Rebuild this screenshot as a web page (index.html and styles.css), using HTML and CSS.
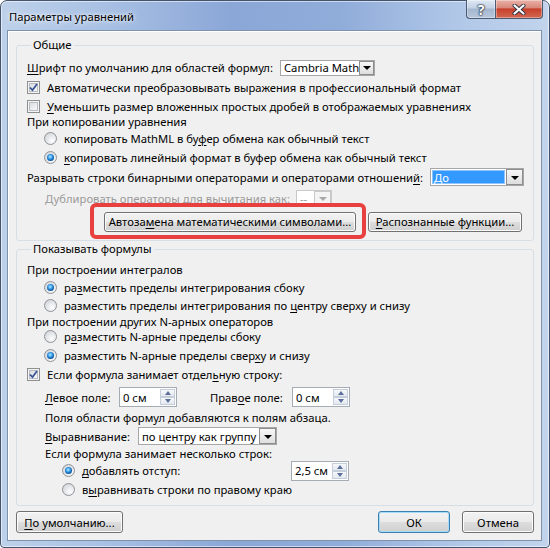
FILE: index.html
```html
<!DOCTYPE html>
<html lang="ru">
<head>
    <meta charset="UTF-8">
    <meta name="viewport" content="width=device-width, initial-scale=1.0">
    <title>Параметры уравнений</title>
    <link rel="stylesheet" href="styles.css">
</head>
<body>
    <div class="window">
        <div class="titlebar">
            <span class="title">Параметры уравнений</span>
            <div class="caption">
                <div class="cap-btn help">?</div>
                <div class="cap-btn close">
                    <svg width="14" height="11" viewBox="0 0 14 11">
                        <path d="M2.5 1.5 L11.5 9.5 M11.5 1.5 L2.5 9.5" stroke="#2b3342" stroke-width="4" stroke-linecap="round"/>
                        <path d="M2.5 1.5 L11.5 9.5 M11.5 1.5 L2.5 9.5" stroke="#fff" stroke-width="2.2" stroke-linecap="round"/>
                    </svg>
                </div>
            </div>
        </div>

        <div class="client">
            <fieldset class="group general">
                <legend>Общие</legend>

                <div class="row">
                    <span class="label w-font"><u>Ш</u>рифт по умолчанию для областей формул:</span>
                    <div class="combo combo-font">
                        <span class="combo-text">Cambria Math</span>
                        <span class="combo-arrow"></span>
                    </div>
                </div>
                <div class="row m4">
                    <span class="cb checked">
                        <svg width="9" height="9" viewBox="0 0 9 9"><path d="M1 4.5 L3.5 7.2 L8 1" fill="none" stroke="#3a5394" stroke-width="1.8"/></svg>
                    </span>
                    <span class="cb-text">Автоматически преобразовывать выражения в профессиональный формат</span>
                </div>
                <div class="row m2h">
                    <span class="cb"></span>
                    <span class="cb-text"><u>У</u>меньшить размер вложенных простых дробей в отображаемых уравнениях</span>
                </div>
                <div class="row mn0h">
                    <span>При копировании уравнения</span>
                </div>
                <div class="row m0h indent-radio">
                    <span class="rb"></span>
                    <span class="rb-text">копировать MathML в бу<u>ф</u>ер обмена как обычный текст</span>
                </div>
                <div class="row m3 indent-radio">
                    <span class="rb on"></span>
                    <span class="rb-text"><u>к</u>опировать линейный формат в буфер обмена как обычный текст</span>
                </div>
                <div class="row m4">
                    <span class="label w-break">Разрывать строки бинарными операторами и операторами отношени<u>й</u>:</span>
                    <div class="combo combo-break">
                        <span class="combo-text selected">До</span>
                        <span class="combo-arrow"></span>
                    </div>
                </div>
                <div class="row m5 indent disabled">
                    <span class="label w-dup">Дублировать операторы для вычитания как:</span>
                    <div class="combo combo-dup">
                        <span class="combo-text">--</span>
                        <span class="combo-arrow"></span>
                    </div>
                </div>
                <div class="row m7h buttons-row">
                    <div class="btn-wrap">
                        <button class="btn btn-auto">Автоза<u>м</u>ена математическими символами...</button>
                        <span class="highlight"></span>
                    </div>
                    <button class="btn btn-func"><u>Р</u>аспознанные функции...</button>
                </div>
            </fieldset>

            <fieldset class="group display">
                <legend>Показывать формулы</legend>

                <div class="row">
                    <span>При построении интегралов</span>
                </div>
                <div class="row m2 indent-radio">
                    <span class="rb on"></span>
                    <span class="rb-text">ра<u>з</u>местить пределы интегрирования сбоку</span>
                </div>
                <div class="row m2h indent-radio">
                    <span class="rb"></span>
                    <span class="rb-text">разместить пределы интегрирования по <u>ц</u>ентру сверху и снизу</span>
                </div>
                <div class="row mn0h">
                    <span>При построении других N-арных операторов</span>
                </div>
                <div class="row mn0h indent-radio">
                    <span class="rb"></span>
                    <span class="rb-text">р<u>а</u>зместить N-арные пределы сбоку</span>
                </div>
                <div class="row m2h indent-radio">
                    <span class="rb on"></span>
                    <span class="rb-text">разместить N-арные пределы свер<u>х</u>у и снизу</span>
                </div>
                <div class="row m3h">
                    <span class="cb checked">
                        <svg width="9" height="9" viewBox="0 0 9 9"><path d="M1 4.5 L3.5 7.2 L8 1" fill="none" stroke="#3a5394" stroke-width="1.8"/></svg>
                    </span>
                    <span class="cb-text">Если формула занимает отдел<u>ь</u>ную строку:</span>
                </div>
                <div class="row m6h indent">
                    <span class="label w-left"><u>Л</u>евое поле:</span>
                    <div class="spin">
                        <span class="spin-text">0 см</span>
                        <span class="spin-btns"><span class="spin-up"></span><span class="spin-down"></span></span>
                    </div>
                    <span class="label w-right">Прав<u>о</u>е поле:</span>
                    <div class="spin">
                        <span class="spin-text">0 см</span>
                        <span class="spin-btns"><span class="spin-up"></span><span class="spin-down"></span></span>
                    </div>
                </div>
                <div class="row m4 indent">
                    <span>Поля области формул добавляются к полям абзаца.</span>
                </div>
                <div class="row m3 indent">
                    <span class="label w-align"><u>В</u>ыравнивание:</span>
                    <div class="combo combo-align">
                        <span class="combo-text">по центру как группу</span>
                        <span class="combo-arrow"></span>
                    </div>
                </div>
                <div class="row m1 indent">
                    <span>Если формула занимает несколько строк:</span>
                </div>
                <div class="row m1h indent-radio2">
                    <span class="radio-item">
                        <span class="rb on"></span>
                        <span class="rb-text"><u>д</u>обавлять отступ:</span>
                    </span>
                    <div class="spin">
                        <span class="spin-text">2,5 см</span>
                        <span class="spin-btns"><span class="spin-up"></span><span class="spin-down"></span></span>
                    </div>
                </div>
                <div class="row m3 indent-radio2">
                    <span class="rb"></span>
                    <span class="rb-text">в<u>ы</u>равнивать строки по правому краю</span>
                </div>
            </fieldset>

            <div class="footer">
                <button class="btn btn-default"><u>П</u>о умолчанию...</button>
                <button class="btn btn-ok">ОК</button>
                <button class="btn btn-cancel">Отмена</button>
            </div>
        </div>
    </div>
</body>
</html>
```

FILE: styles.css
```css
body {
    margin: 0;
    font-family: "Noto Sans", sans-serif;
    font-size: 11.25px;
    color: #000;
    background-color: #fff;
}

u {
    text-decoration-thickness: 1px;
    text-underline-offset: 2px;
}

/* window frame */
.window {
    width: 550px;
    height: 548px;
    box-sizing: border-box;
    border: 1px solid #43546c;
    border-radius: 7px 7px 4px 4px;
    background: linear-gradient(90deg, #bed1ea 0%, #a9c1e4 18%, #8ba7d7 42%, #90acd9 62%, #b1c8e8 84%, #c2d4ec 100%);
    box-shadow: inset 0 0 0 1px rgba(255, 255, 255, 0.55);
    display: flex;
    flex-direction: column;
}

.titlebar {
    height: 29px;
    display: flex;
    align-items: flex-start;
}

.title {
    margin-left: 8px;
    padding-top: 7px;
    line-height: 17px;
    text-shadow: 0 0 6px rgba(255, 255, 255, 0.9), 0 0 3px rgba(255, 255, 255, 0.9);
}

.caption {
    margin-left: auto;
    margin-right: 6px;
    margin-top: -1px;
    display: flex;
}

.cap-btn {
    height: 19px;
    box-sizing: border-box;
    border: 1px solid #4a5a73;
    border-top: none;
    display: flex;
    justify-content: center;
    align-items: center;
    box-shadow: inset 0 0 0 1px rgba(255, 255, 255, 0.35);
}

.help {
    width: 29px;
    border-radius: 0 0 0 4px;
    border-right: none;
    background: linear-gradient(#dfe8f4 0%, #c3d1e4 45%, #a5b7cf 50%, #b7c7dc 100%);
    color: #fff;
    font-weight: bold;
    font-size: 14px;
    text-shadow: 0 0 1px #1d2a3d, 0 0 2px #1d2a3d, 0 0 2px #1d2a3d;
}

.close {
    width: 48px;
    border-radius: 0 0 4px 0;
    background: linear-gradient(#eab2a8 0%, #d98a7c 42%, #c7402c 50%, #d2674f 100%);
}

/* client area */
.client {
    flex: 1;
    margin: 0 7px 6px 6px;
    border: 1px solid #7f92ab;
    background-color: #f0f0f0;
    box-shadow: inset 1px 1px 0 #fff;
    padding: 6px 7px 7px 8px;
    display: flex;
    flex-direction: column;
}

.group {
    margin: 0;
    padding: 0 0 0 10px;
    min-inline-size: 0;
    border: 1px solid #d5dfe5;
    border-radius: 3px;
}

.group legend {
    margin-left: 4px;
    padding: 0 2px;
    line-height: 16px;
}

.general {
    padding-top: 6.5px;
    padding-bottom: 10.5px;
}

.display {
    padding-top: 4px;
    padding-bottom: 7.5px;
}

.row {
    height: 16px;
    line-height: 13px;
    display: flex;
    align-items: center;
    white-space: nowrap;
}

.m0h { margin-top: 0.5px; }
.m1 { margin-top: 1px; }
.m1h { margin-top: 1.5px; }
.m2 { margin-top: 2px; }
.m2h { margin-top: 2.5px; }
.m3 { margin-top: 3px; }
.m3h { margin-top: 3.5px; }
.m4 { margin-top: 4px; }
.m5 { margin-top: 5px; }
.m6h { margin-top: 6.5px; }
.m7h { margin-top: 7.5px; }
.mn0h { margin-top: -0.5px; }

.indent { padding-left: 18px; }
.indent-radio { padding-left: 17px; }
.indent-radio2 { padding-left: 35px; }

.disabled { color: #9b9b9b; }

.label { flex: none; }
.w-font { width: 253px; }
.w-break { width: 403px; }
.w-dup { width: 251px; }
.w-left { width: 74px; }
.w-right { width: 82px; margin-left: 33px; }
.w-align { width: 93px; }

/* checkbox */
.cb {
    flex: none;
    width: 13px;
    height: 13px;
    box-sizing: border-box;
    border: 1px solid #8e8f8f;
    background: linear-gradient(135deg, #cfd3d8 0%, #eef0f2 60%, #fbfbfb 100%);
    box-shadow: inset 0 0 0 1px #f4f4f4, inset 0 0 0 2px #b8bdc3;
    display: flex;
    justify-content: center;
    align-items: center;
}

.cb-text { margin-left: 7px; }

/* radio */
.rb {
    flex: none;
    width: 13px;
    height: 13px;
    box-sizing: border-box;
    border-radius: 50%;
    border: 1px solid #8f9296;
    background: radial-gradient(circle at 65% 70%, #ffffff 0%, #e6e8eb 45%, #c9cdd2 100%);
    display: flex;
    justify-content: center;
    align-items: center;
}

.rb.on::after {
    content: "";
    width: 7px;
    height: 7px;
    border-radius: 50%;
    background: radial-gradient(circle at 45% 40%, #b5ecff 0%, #3ea2ec 35%, #0f5ba6 65%, #0b2f5e 100%);
}

.rb-text { margin-left: 7px; }

.radio-item {
    width: 229px;
    display: flex;
    align-items: center;
}

/* combo boxes */
.combo {
    flex: none;
    display: flex;
    box-sizing: border-box;
    border: 1px solid #a7a7a7;
    background-color: #fff;
}

.combo-text {
    flex: 1;
    padding-left: 3px;
    display: flex;
    align-items: center;
}

.combo-text.selected {
    background-color: #3399ff;
    color: #fff;
    margin: 1px;
    padding-left: 2px;
    box-shadow: inset 0 0 0 1px #8ec4ff;
}

.combo-arrow {
    width: 17px;
    box-sizing: border-box;
    border: 1px solid #8d8d8d;
    background: linear-gradient(#f7f7f7, #dedede);
    display: flex;
    justify-content: center;
    align-items: center;
}

.combo-arrow::after {
    content: "";
    border-left: 4px solid transparent;
    border-right: 4px solid transparent;
    border-top: 4px solid #000;
    margin-top: 1px;
}

.combo-font { width: 95px; height: 16px; }
.combo-break { width: 94px; height: 18px; }
.combo-dup { width: 36px; height: 17px; border-color: #c9c9c9; }
.combo-dup .combo-arrow { border-color: #c9c9c9; background: #f4f4f4; }
.combo-dup .combo-arrow::after { border-top-color: #a8a8a8; }
.combo-align { width: 139px; height: 18px; }

/* spin boxes */
.spin {
    flex: none;
    width: 58px;
    height: 20px;
    box-sizing: border-box;
    border: 1px solid #a5acb5;
    background-color: #fff;
    display: flex;
}

.spin-text {
    flex: 1;
    padding-left: 3px;
    display: flex;
    align-items: center;
}

.spin-btns {
    width: 15px;
    padding: 1px 1px 1px 0;
    display: flex;
    flex-direction: column;
}

.spin-up,
.spin-down {
    flex: 1;
    border: 1px solid #c5cfdb;
    background: linear-gradient(#f6f8fb, #e4e9f0);
    display: flex;
    justify-content: center;
    align-items: center;
}

.spin-up::after {
    content: "";
    border-left: 3.5px solid transparent;
    border-right: 3.5px solid transparent;
    border-bottom: 4px solid #5b6f9a;
}

.spin-down::after {
    content: "";
    border-left: 3.5px solid transparent;
    border-right: 3.5px solid transparent;
    border-top: 4px solid #5b6f9a;
}

/* buttons */
.btn {
    font-family: inherit;
    font-size: inherit;
    color: #000;
    padding: 0;
    box-sizing: border-box;
    border: 1px solid #707070;
    border-radius: 3px;
    background: linear-gradient(#f2f2f2 0%, #ebebeb 48%, #dddddd 52%, #cfcfcf 100%);
    box-shadow: inset 0 0 0 1px #fcfcfc;
}

.buttons-row { padding-left: 77px; }

.btn-wrap {
    position: relative;
    display: flex;
}

.btn-auto { width: 252px; height: 20px; }
.btn-func { width: 154px; height: 20px; margin-left: 12px; }

.highlight {
    position: absolute;
    left: -14px;
    top: -9px;
    right: -10px;
    bottom: -7px;
    border: 4px solid #e8403f;
    border-radius: 6px;
}

.footer {
    margin-top: 5px;
    display: flex;
}

.btn-default { width: 107px; height: 22px; }
.btn-ok { width: 72px; height: 22px; margin-left: auto; border-color: #3c7fb1; box-shadow: inset 0 0 0 1px #a6dcf7; }
.btn-cancel { width: 72px; height: 22px; margin-left: 12px; }
```
